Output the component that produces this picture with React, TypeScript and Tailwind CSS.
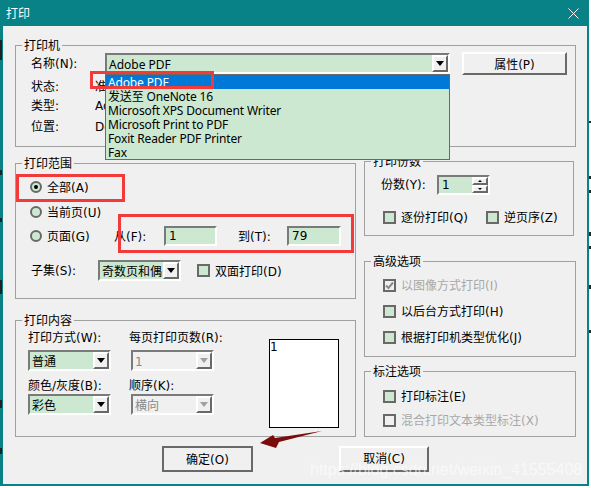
const green = 'bg-[#cde8d0]';
const sunken = 'border-2 border-t-[#7a7a7a] border-l-[#7a7a7a] border-r-white border-b-white';
const raised = 'border-2 border-t-white border-l-white border-r-[#696969] border-b-[#696969] bg-[#f0f0f0]';
const nameFont = "font-['Noto_Sans','Noto_Sans_CJK_SC',sans-serif]";
const label = 'h-[14px] leading-[16px]';

function Group({ title, className, children }: { title: string; className: string; children?: React.ReactNode }) {
  return (
    <fieldset className={`border border-[#a0a0a0] min-w-0 ${className}`}>
      <legend className="ml-[6px] px-[2px] h-[16px] leading-[18px]">{title}</legend>
      {children}
    </fieldset>
  );
}

function Caret({ disabled }: { disabled?: boolean }) {
  return (
    <div className={`w-[16px] h-full flex items-center justify-center shrink-0 ${raised}`}>
      <div className={`w-0 h-0 border-x-[4px] border-x-transparent border-t-[5px] ${disabled ? 'border-t-[#a0a0a0]' : 'border-t-black'}`} />
    </div>
  );
}

function Combo({ value, className, disabled, font = '' }: { value: string; className: string; disabled?: boolean; font?: string }) {
  return (
    <div className={`flex items-center h-[21px] ${sunken} ${disabled ? 'bg-[#f0f0f0] text-[#8a8a8a]' : green} ${className}`}>
      <span className={`flex-1 pl-[2px] whitespace-nowrap ${label} ${font}`}>{value}</span>
      <Caret disabled={disabled} />
    </div>
  );
}

function Check({ text, checked, disabled, className = '' }: { text: string; checked?: boolean; disabled?: boolean; className?: string }) {
  return (
    <div className={`flex items-center gap-[5px] ${disabled ? 'text-[#a8a8a8]' : ''} ${className}`}>
      <div className={`w-[13px] h-[13px] border-2 border-[#696969] flex items-center justify-center ${disabled ? 'bg-[#f0f0f0]' : green}`}>
        {checked && (
          <svg width="9" height="9" viewBox="0 0 9 9">
            <path d="M1 4.5 L3.5 7 L8 1.5" fill="none" stroke="#8a8a8a" strokeWidth="2" />
          </svg>
        )}
      </div>
      <span className={label}>{text}</span>
    </div>
  );
}

function Radio({ text, checked }: { text: string; checked?: boolean }) {
  return (
    <div className="flex items-center gap-[5px]">
      <div className={`w-[12px] h-[12px] rounded-full border-2 border-[#696969] flex items-center justify-center ${green}`}>
        {checked && <div className="w-[4px] h-[4px] rounded-full bg-black" />}
      </div>
      <span className={label}>{text}</span>
    </div>
  );
}

function Field({ value, className }: { value: string; className: string }) {
  return <div className={`h-[20px] pl-[3px] leading-[16px] ${sunken} ${green} ${className}`}>{value}</div>;
}

const printers = [
  'Adobe PDF',
  '发送至 OneNote 16',
  'Microsoft XPS Document Writer',
  'Microsoft Print to PDF',
  'Foxit Reader PDF Printer',
  'Fax',
];

export default function App() {
  return (
    <div className="relative w-[591px] h-[488px] bg-white overflow-hidden text-[12px] leading-[14px] text-black font-['DejaVu_Sans','Noto_Sans_CJK_SC',sans-serif]">
      <div className="w-[589px] h-[486px] flex flex-col bg-[#088286] pl-[3px] pr-[2px] pb-[2px]">
        {/* title bar */}
        <div className="h-[26px] -ml-[3px] -mr-[2px] flex items-center justify-between pl-[6px] pr-[10px] text-white shrink-0">
          <span className={label}>打印</span>
          <svg width="11" height="11" viewBox="0 0 11 11">
            <path d="M0.5 0.5 L10.5 10.5 M10.5 0.5 L0.5 10.5" stroke="white" strokeWidth="1" />
          </svg>
        </div>

        <div className="flex-1 bg-[#f0f0f0] pl-[12px] pt-[11px]">
          <Group title="打印机" className="w-[561px] h-[110px]">
            <div className="flex pl-[15px]">
              <div className="w-[74px] flex flex-col">
                <div className="h-[20px] leading-[22px]">名称(N):</div>
                <div className="mt-[7px]">状态:</div>
                <div className="mt-[5px]">类型:</div>
                <div className="mt-[7px]">位置:</div>
              </div>
              <div className="flex flex-col">
                <Combo value="Adobe PDF" font={nameFont} className="w-[345px]" />
                <div className="mt-[6px] -ml-[10px]">准</div>
                <div className="mt-[5px] -ml-[10px]">Ad</div>
                <div className="mt-[7px] -ml-[10px]">Do</div>
              </div>
              <div className={`ml-[12px] -mt-[1px] w-[105px] h-[23px] flex items-center justify-center ${raised}`}>
                <span className={label}>属性(P)</span>
              </div>
            </div>
          </Group>

          <div className="flex gap-[8px]">
            <div className="w-[341px] flex flex-col pt-[8px] gap-[13px]">
              <Group title="打印范围" className="h-[144px]">
                <div className="pl-[14px] pt-[9px] flex flex-col">
                  <Radio text="全部(A)" checked />
                  <div className="mt-[11px]"><Radio text="当前页(U)" /></div>
                  <div className="mt-[7px] flex items-center">
                    <div className="w-[84px]"><Radio text="页面(G)" /></div>
                    <span className={`w-[50px] ${label}`}>从(F):</span>
                    <Field value="1" className="w-[53px]" />
                    <span className={`ml-[21px] w-[49px] ${label}`}>到(T):</span>
                    <Field value="79" className="w-[54px]" />
                  </div>
                  <div className="mt-[14px] flex items-center">
                    <span className="w-[68px] pl-[1px]">子集(S):</span>
                    <Combo value="奇数页和偶" className="w-[83px]" />
                    <Check text="双面打印(D)" className="ml-[16px]" />
                  </div>
                </div>
              </Group>

              <Group title="打印内容" className="h-[125px]">
                <div className="flex pl-[12px] pt-[3px]">
                  <div className="w-[101px]">
                    <div>打印方式(W):</div>
                    <Combo value="普通" className="w-[83px] mt-[5px]" />
                    <div className="mt-[8px]">颜色/灰度(B):</div>
                    <Combo value="彩色" className="w-[83px] mt-[1px]" />
                  </div>
                  <div className="w-[140px]">
                    <div>每页打印页数(R):</div>
                    <Combo value="1" disabled className="w-[83px] mt-[5px] ml-[2px]" />
                    <div className="mt-[8px]">顺序(K):</div>
                    <Combo value="横向" disabled className="w-[83px] mt-[1px] ml-[2px]" />
                  </div>
                  <div className="w-[70px] h-[89px] mt-[8px] bg-white border border-black">1</div>
                </div>
              </Group>
            </div>

            <div className="w-[212px] flex flex-col pt-[6px]">
              <Group title="打印份数" className="w-[210px] h-[83px]">
                <div className="pl-[16px] pt-[6px]">
                  <div className="flex items-center">
                    <span className="w-[56px]">份数(Y):</span>
                    <div className={`w-[53px] h-[20px] flex ${sunken} ${green}`}>
                      <span className="flex-1 pl-[3px] leading-[16px]">1</span>
                      <div className="w-[16px] h-full flex flex-col">
                        <div className={`flex-1 flex items-center justify-center ${raised} border`}>
                          <div className="w-0 h-0 border-x-[2px] border-x-transparent border-b-[2px] border-b-black" />
                        </div>
                        <div className={`flex-1 flex items-center justify-center ${raised} border`}>
                          <div className="w-0 h-0 border-x-[2px] border-x-transparent border-t-[2px] border-t-black" />
                        </div>
                      </div>
                    </div>
                  </div>
                  <div className="flex mt-[15px] pl-[2px]">
                    <Check text="逐份打印(Q)" className="w-[103px]" />
                    <Check text="逆页序(Z)" />
                  </div>
                </div>
              </Group>

              <Group title="高级选项" className="mt-[17px] h-[104px]">
                <div className="pl-[18px] pt-[9px] flex flex-col gap-[12px]">
                  <Check text="以图像方式打印(I)" checked disabled />
                  <Check text="以后台方式打印(H)" />
                  <Check text="根据打印机类型优化(J)" />
                </div>
              </Group>

              <Group title="标注选项" className="mt-[6px] h-[74px]">
                <div className="pl-[18px] pt-[10px] flex flex-col gap-[10px]">
                  <Check text="打印标注(E)" />
                  <Check text="混合打印文本类型标注(X)" disabled />
                </div>
              </Group>
            </div>
          </div>

          <div className="flex mt-[9px] pl-[147px] gap-[86px]">
            <div className="w-[91px] h-[26px] border-2 border-[#696969] bg-[#f0f0f0] flex items-center justify-center">
              <span className={label}>确定(O)</span>
            </div>
            <div className={`w-[90px] h-[26px] flex items-center justify-center ${raised}`}>取消(C)</div>
          </div>
        </div>
      </div>

      {/* open printer list */}
      <div className={`absolute left-[105px] top-[74px] w-[345px] h-[86px] border border-[#696969] tracking-[-0.15px] ${green} ${nameFont}`}>
        {printers.map((p, i) => (
          <div key={p} className={`h-[14px] leading-[15px] pl-[2px] whitespace-nowrap ${i === 0 ? 'bg-[#0078d7] text-white' : ''}`}>{p}</div>
        ))}
      </div>

      {/* annotations drawn on top of the screenshot */}
      <div className="absolute left-[90px] top-[71px] w-[124px] h-[18px] border-[3px] border-[#f33a3a]" />
      <div className="absolute left-[16px] top-[174px] w-[109px] h-[28px] border-[3px] border-[#f33a3a]" />
      <div className="absolute left-[118px] top-[214px] w-[236px] h-[39px] border-[3px] border-[#f33a3a]" />
      <svg className="absolute left-[258px] top-[429px]" width="66" height="21" viewBox="258 429 66 21">
        <polygon points="260,443 273,435 275,438 322,431 279,442 276,448" fill="#7b0c0c" />
      </svg>
      <div className="absolute left-[310px] top-[461px] text-[16px] leading-[18px] text-white/60 whitespace-nowrap font-['Liberation_Sans',sans-serif]">
        https://blog.csdn.net/weixin_41555408
      </div>

      {/* bits of the document behind the dialog */}
      <svg className="absolute left-0 top-0" width="591" height="488" viewBox="0 0 591 488">
        <path d="M0 40h2v20H0z M0 170h2v5H0z M0 218h2v4H0z M0 280h2v14H0z M0 400h2v8H0z M0 448h2v6H0z" fill="#222" />
        <path d="M589 121h2v2h-2z M589 176h2v3h-2z M589 190h2v3h-2z M589 232h2v4h-2z M589 246h2v3h-2z M589 285h2v4h-2z M589 330h2v3h-2z" fill="#222" />
      </svg>
    </div>
  );
}
